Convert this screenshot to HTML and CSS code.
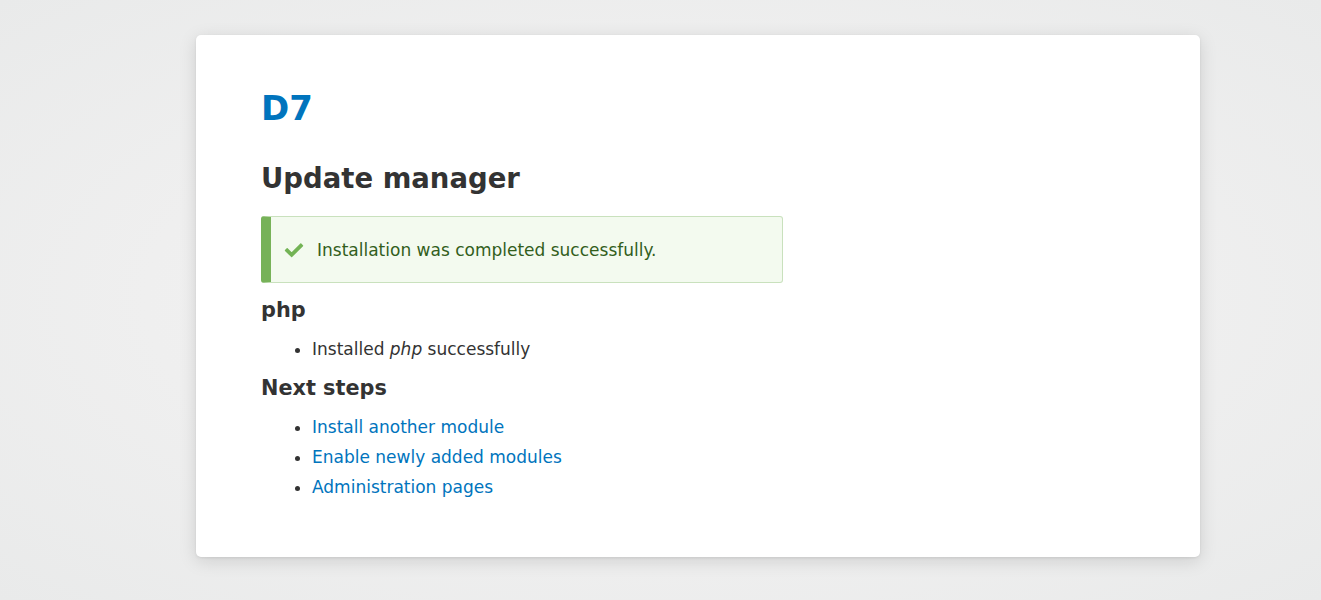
FILE: index.html
```html
<!DOCTYPE html>
<html lang="en">
<head>
<meta charset="utf-8">
<title>Update manager | D7</title>
<link rel="stylesheet" href="styles.css">
</head>
<body>
<div class="page">
  <main class="card">
    <h1 class="site-name"><a href="#">D7</a></h1>
    <h1 class="page-title">Update manager</h1>
    <div class="message message--status">
      <svg class="message-icon" width="20" height="20" viewBox="0 0 16 16" aria-hidden="true"><path fill="#73b355" d="M6.464 13.676c-.194.194-.513.194-.707 0l-4.96-4.955c-.194-.194-.194-.513 0-.707l1.405-1.407c.194-.195.512-.195.707 0l2.849 2.848c.194.195.513.195.707 0l6.629-6.626c.195-.194.514-.194.707 0l1.404 1.404c.193.194.193.513 0 .707l-8.741 8.736z"/></svg>
      <span class="message-text">Installation was completed successfully.</span>
    </div>
    <h2 class="section-title">php</h2>
    <ul class="list">
      <li>Installed <em>php</em> successfully</li>
    </ul>
    <h2 class="section-title">Next steps</h2>
    <ul class="list">
      <li><a href="#">Install another module</a></li>
      <li><a href="#">Enable newly added modules</a></li>
      <li><a href="#">Administration pages</a></li>
    </ul>
  </main>
</div>
</body>
</html>
```
FILE: styles.css
```css
html, body {
  margin: 0;
  padding: 0;
  height: 100%;
}
body {
  font-family: "DejaVu Sans", "Liberation Sans", sans-serif;
  font-size: 17px;
  color: #333;
  background: radial-gradient(ellipse at 50% 50%, #f5f5f5 0%, #efefef 55%, #e9eaea 100%);
  overflow: hidden;
}
a {
  color: #0074bd;
  text-decoration: none;
}
.page {
  padding: 35px 0 0 196px;
}
.card {
  width: 1004px;
  box-sizing: border-box;
  background: #fff;
  border-radius: 5px;
  box-shadow: 0 4px 18px rgba(0, 0, 0, 0.13), 0 1px 3px rgba(0, 0, 0, 0.08);
  padding: 51px 65px 44px;
}
.site-name {
  margin: 0 0 30px;
  font-size: 34px;
  line-height: 44px;
  font-weight: bold;
}
.page-title {
  margin: 0 0 20px;
  font-size: 27.5px;
  line-height: 36px;
  font-weight: bold;
  color: #333;
}
.message {
  width: 522px;
  box-sizing: border-box;
  display: flex;
  align-items: center;
  gap: 13px;
  padding: 22px 20px 20px 13px;
  border: 1px solid #c9e1bd;
  border-left: 10px solid #77b259;
  border-radius: 3px;
  background: #f3faef;
  color: #325e1c;
  line-height: 23px;
  margin-bottom: 14px;
}
.message-icon {
  flex: none;
  display: block;
  margin-top: -1px;
}
.section-title {
  margin: 0;
  font-size: 20.8px;
  line-height: 26px;
  font-weight: bold;
}
.list {
  margin: 11px 0 11px;
  padding: 0 0 0 51px;
}
.list li {
  line-height: 24px;
  padding: 3px 0;
}
```
